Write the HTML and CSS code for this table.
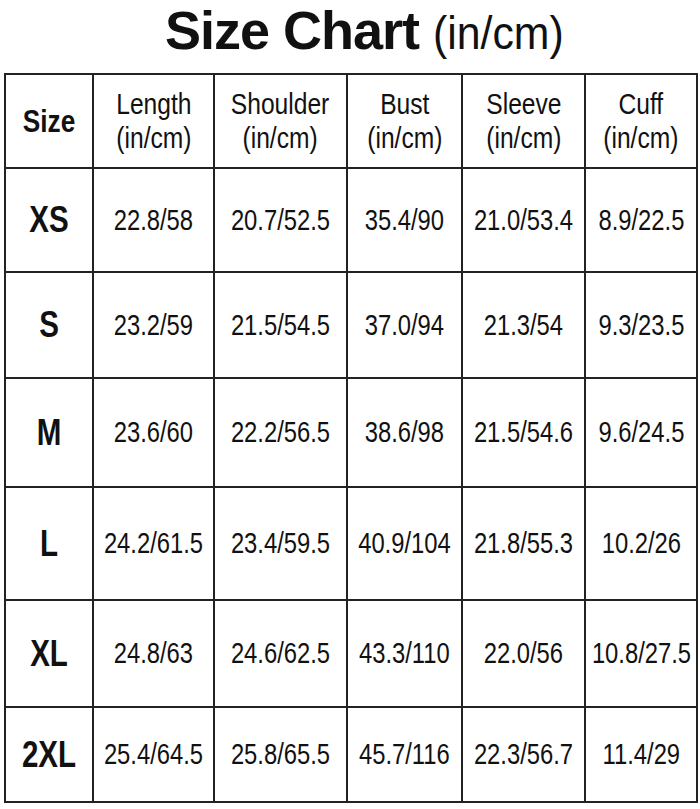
FILE: index.html
```html
<!DOCTYPE html>
<html>
<head>
<meta charset="utf-8">
<link rel="stylesheet" href="styles.css">
</head>
<body>
<div class="page">
  <h1 class="title"><span class="title-main">Size Chart</span><span class="title-unit">(in/cm)</span></h1>
  <div class="chart">
    <div class="cell head size-head"><span class="txt">Size</span></div>
    <div class="cell head"><span class="txt">Length<br>(in/cm)</span></div>
    <div class="cell head"><span class="txt">Shoulder<br>(in/cm)</span></div>
    <div class="cell head"><span class="txt">Bust<br>(in/cm)</span></div>
    <div class="cell head"><span class="txt">Sleeve<br>(in/cm)</span></div>
    <div class="cell head"><span class="txt">Cuff<br>(in/cm)</span></div>

    <div class="cell size"><span class="txt">XS</span></div>
    <div class="cell"><span class="txt">22.8/58</span></div>
    <div class="cell"><span class="txt">20.7/52.5</span></div>
    <div class="cell"><span class="txt">35.4/90</span></div>
    <div class="cell"><span class="txt">21.0/53.4</span></div>
    <div class="cell"><span class="txt">8.9/22.5</span></div>

    <div class="cell size"><span class="txt">S</span></div>
    <div class="cell"><span class="txt">23.2/59</span></div>
    <div class="cell"><span class="txt">21.5/54.5</span></div>
    <div class="cell"><span class="txt">37.0/94</span></div>
    <div class="cell"><span class="txt">21.3/54</span></div>
    <div class="cell"><span class="txt">9.3/23.5</span></div>

    <div class="cell size"><span class="txt">M</span></div>
    <div class="cell"><span class="txt">23.6/60</span></div>
    <div class="cell"><span class="txt">22.2/56.5</span></div>
    <div class="cell"><span class="txt">38.6/98</span></div>
    <div class="cell"><span class="txt">21.5/54.6</span></div>
    <div class="cell"><span class="txt">9.6/24.5</span></div>

    <div class="cell size"><span class="txt">L</span></div>
    <div class="cell"><span class="txt">24.2/61.5</span></div>
    <div class="cell"><span class="txt">23.4/59.5</span></div>
    <div class="cell"><span class="txt">40.9/104</span></div>
    <div class="cell"><span class="txt">21.8/55.3</span></div>
    <div class="cell"><span class="txt">10.2/26</span></div>

    <div class="cell size"><span class="txt">XL</span></div>
    <div class="cell"><span class="txt">24.8/63</span></div>
    <div class="cell"><span class="txt">24.6/62.5</span></div>
    <div class="cell"><span class="txt">43.3/110</span></div>
    <div class="cell"><span class="txt">22.0/56</span></div>
    <div class="cell"><span class="txt">10.8/27.5</span></div>

    <div class="cell size"><span class="txt">2XL</span></div>
    <div class="cell"><span class="txt">25.4/64.5</span></div>
    <div class="cell"><span class="txt">25.8/65.5</span></div>
    <div class="cell"><span class="txt">45.7/116</span></div>
    <div class="cell"><span class="txt">22.3/56.7</span></div>
    <div class="cell"><span class="txt">11.4/29</span></div>
  </div>
</div>
</body>
</html>
```
FILE: styles.css
```css
html, body {
  margin: 0;
  padding: 0;
  background: #ffffff;
}

.page {
  width: 700px;
  height: 809px;
  font-family: "Liberation Sans", Arial, sans-serif;
  color: #111111;
}

.title {
  margin: 0;
  height: 73px;
  box-sizing: border-box;
  padding: 0 0 0 165px;
  display: flex;
  align-items: baseline;
  font-weight: normal;
  line-height: 1.12;
  white-space: nowrap;
}

.title-main {
  font-weight: bold;
  font-size: 54px;
  letter-spacing: -1px;
}

.title-unit {
  display: inline-block;
  margin-left: 14px;
  font-size: 46px;
  transform: scaleX(0.93);
  transform-origin: left center;
}

.chart {
  margin-left: 4px;
  width: 694px;
  box-sizing: border-box;
  display: grid;
  grid-template-columns: 86px 119px 131px 113px 121px 110px;
  grid-template-rows: 92px 102px 104px 107px 111px 105px 93px;
  gap: 2px;
  padding: 2px;
  background: #222222;
}

.cell {
  background: #ffffff;
  display: flex;
  align-items: center;
  justify-content: center;
  text-align: center;
  font-size: 29px;
  line-height: 1;
  white-space: nowrap;
}

.txt {
  display: inline-block;
  transform: scaleX(0.82);
}

.head {
  font-size: 30px;
  line-height: 34px;
}

.size-head {
  font-weight: bold;
  font-size: 32px;
}

.size {
  font-weight: bold;
  font-size: 36px;
}
```
